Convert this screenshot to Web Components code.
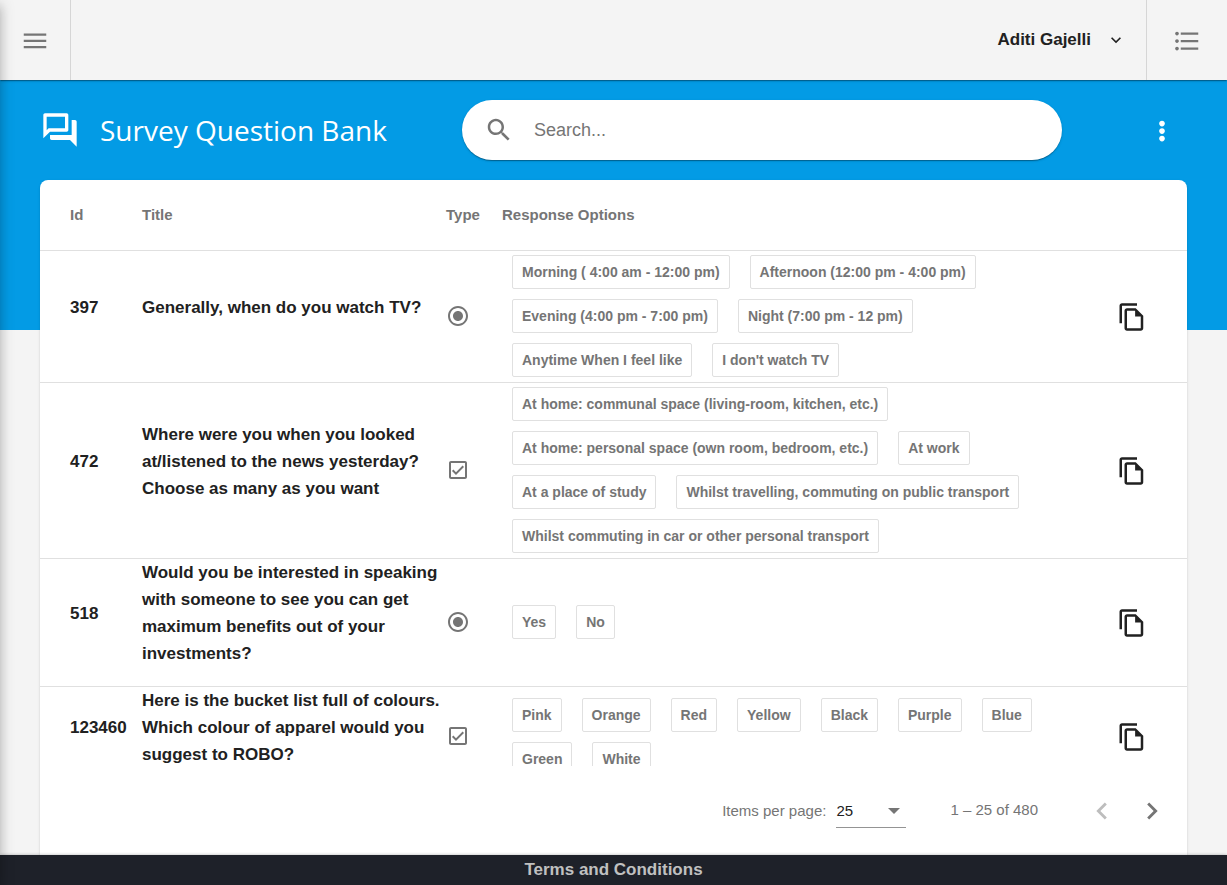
<!DOCTYPE html>
<html lang="en">
<head>
<meta charset="utf-8">
<meta name="viewport" content="width=device-width, initial-scale=1">
<title>Survey Question Bank</title>
<style>
  html, body { height: 100%; }
  body {
    margin: 0;
    font-family: "Liberation Sans", Arial, sans-serif;
    color: #212121;
    background: #f4f4f4;
    --primary: #039be5;
    --muted: #757575;
    --line: #e0e0e0;
    --shadow: 0 2px 1px -1px rgba(0,0,0,.2), 0 1px 1px rgba(0,0,0,.14), 0 1px 3px rgba(0,0,0,.12);
  }
</style>
</head>
<body>
<app-shell>
  <app-toolbar slot="toolbar">Aditi Gajelli</app-toolbar>
  <page-header slot="header">
    Survey Question Bank
    <search-box slot="search"></search-box>
  </page-header>
  <question-table></question-table>
  <table-paginator slot="paginator"></table-paginator>
  <app-footer slot="footer">Terms and Conditions</app-footer>
</app-shell>

<script>
function define(name, html, setup) {
  const template = document.createElement('template');
  template.innerHTML = html;
  customElements.define(name, class extends HTMLElement {
    constructor() {
      super();
      this.attachShadow({ mode: 'open' }).append(template.content.cloneNode(true));
    }
    connectedCallback() { if (setup) setup(this, this.shadowRoot); }
  });
}

const ICONS = {
  menu: 'M3 17.8h18v-1.800H3v1.800zm0-5h18v-1.800H3v1.800zm0-6.800v1.800h18V6H3z',
  list: 'M4 10.5c-.83 0-1.5.67-1.5 1.5s.67 1.5 1.5 1.5 1.5-.67 1.5-1.5-.67-1.5-1.5-1.5zm0-6c-.83 0-1.5.67-1.5 1.5S3.17 7.500 4 7.500 5.500 6.830 5.500 6 4.830 4.500 4 4.500zm0 12c-.83 0-1.500.680-1.500 1.500s.680 1.500 1.500 1.500 1.500-.680 1.500-1.500-.670-1.500-1.500-1.500zM7 18.900h14v-1.800H7v1.800zm0-6h14v-1.800H7v1.800zm0-7.800v1.800h14V5.100H7z',
  expand: 'M7.41 8.59 12 13.17l4.59-4.58L18 10l-6 6-6-6z',
  forum: 'M15 4v7H5.17L4 12.17V4h11m1-2H3c-.55 0-1 .45-1 1v14l4-4h10c.55 0 1-.45 1-1V3c0-.55-.45-1-1-1zm5 4h-2v9H6v2c0 .55.45 1 1 1h11l4 4V7c0-.55-.45-1-1-1z',
  search: 'M15.5 14h-.79l-.28-.27C15.41 12.59 16 11.110 16 9.500 16 5.910 13.090 3 9.500 3S3 5.910 3 9.500 5.910 16 9.500 16c1.610 0 3.090-.590 4.230-1.570l.270.280v.790l5 4.990L20.490 19l-4.990-5zm-6 0C7.010 14 5 11.990 5 9.500S7.010 5 9.500 5 14 7.010 14 9.500 11.990 14 9.500 14z',
  more: 'M12 8.300c1.270 0 2.300-1.030 2.300-2.300s-1.030-2.300-2.300-2.300-2.300 1.030-2.300 2.300 1.030 2.300 2.300 2.300zm0 1.400c-1.270 0-2.300 1.030-2.300 2.300s1.030 2.300 2.300 2.300 2.300-1.030 2.300-2.300-1.030-2.300-2.300-2.300zm0 6c-1.270 0-2.300 1.030-2.300 2.300s1.030 2.300 2.300 2.300 2.300-1.030 2.300-2.300-1.030-2.300-2.300-2.300z',
  radio: 'M12 7c-2.760 0-5 2.240-5 5s2.240 5 5 5 5-2.240 5-5-2.240-5-5-5zm0-5C6.480 2 2 6.480 2 12s4.480 10 10 10 10-4.480 10-10S17.520 2 12 2zm0 18c-4.420 0-8-3.580-8-8s3.580-8 8-8 8 3.580 8 8-3.580 8-8 8z',
  checkbox: 'M19 3H5c-1.100 0-2 .9-2 2v14c0 1.100.9 2 2 2h14c1.100 0 2-.9 2-2V5c0-1.100-.9-2-2-2zm0 16H5V5h14v14zM17.990 9l-1.410-1.420-6.590 6.590-2.580-2.570-1.420 1.410 4 3.990z',
  copy: 'M16 1H4c-1.100 0-2 .9-2 2v14h2V3h12V1zM15 5l6 6v10c0 1.100-.9 2-2 2H8c-1.100 0-2-.9-2-2V7c0-1.100.9-2 2-2h7zM8 7v14h11v-9.500h-4.500V7H8z',
  prev: 'M15.410 7.410 14 6l-6 6 6 6 1.410-1.410L10.830 12z',
  next: 'M10 6 8.590 7.410 13.170 12l-4.580 4.590L10 18l6-6z',
  dropdown: 'M6 10h12l-6 6z'
};

define('ui-icon', `
  <style>
    :host { display: block; width: var(--size, 24px); height: var(--size, 24px); flex: none; }
    svg { display: block; width: 100%; height: 100%; fill: currentColor; }
  </style>
  <svg viewBox="0 0 24 24" aria-hidden="true"><path fill-rule="evenodd"></path></svg>`,
  (el, root) => root.querySelector('path').setAttribute('d', ICONS[el.getAttribute('name')]));

define('app-shell', `
  <style>
    :host { display: flex; flex-direction: column; height: 100vh; overflow: hidden; }
    aside {
      position: fixed; z-index: 3; top: 0; bottom: 0; right: 100%; width: 280px;
      box-shadow: 0 5px 5px -3px rgba(0,0,0,.2), 0 8px 10px 1px rgba(0,0,0,.14), 0 3px 14px 2px rgba(0,0,0,.12);
    }
    main {
      flex: 1; min-height: 0; display: flex; flex-direction: column; padding: 0 40px;
      background: linear-gradient(var(--primary) 0 250px, transparent 250px);
    }
    .card {
      flex: 1; min-height: 0; display: flex; flex-direction: column;
      background: #fff; border-radius: 8px 8px 0 0; box-shadow: var(--shadow);
    }
    .scroll { flex: 1; min-height: 0; overflow-y: auto; scrollbar-width: none; }
  </style>
  <aside></aside>
  <slot name="toolbar"></slot>
  <main>
    <slot name="header"></slot>
    <section class="card">
      <div class="scroll"><slot></slot></div>
      <slot name="paginator"></slot>
    </section>
  </main>
  <slot name="footer"></slot>`);

define('app-toolbar', `
  <style>
    :host { display: flex; height: 80px; flex: none; position: relative; z-index: 2; background: #f4f4f4; box-shadow: var(--shadow); }
    button { font: inherit; color: inherit; background: none; border: 0; padding: 0; display: flex; align-items: center; justify-content: center; }
    .side { --size: 30px; box-sizing: border-box; color: var(--muted); padding-top: 2px; }
    .menu { width: 71px; border-right: 1px solid #d6d6d6; }
    .list { width: 81px; border-left: 1px solid #d6d6d6; }
    .user { --size: 20px; margin-left: auto; padding: 0 20px; gap: 15px; font-size: 17px; font-weight: bold; }
  </style>
  <button class="side menu" aria-label="Open menu"><ui-icon name="menu"></ui-icon></button>
  <button class="user"><span><slot></slot></span><ui-icon name="expand"></ui-icon></button>
  <button class="side list" aria-label="Quick panel"><ui-icon name="list"></ui-icon></button>`);

define('page-header', `
  <style>
    :host { display: grid; grid-template-columns: 422px minmax(0, 600px) 1fr; align-items: center; height: 100px; flex: none; color: #fff; }
    .title { display: flex; align-items: center; gap: 20px; --size: 40px; }
    h1 { margin: 0; font: 400 28px/40px "Open Sans", "Noto Sans", sans-serif; white-space: nowrap; }
    button { justify-self: end; width: 50px; height: 50px; padding: 2px 0 0; border: 0; background: none; color: inherit; display: grid; place-items: center; --size: 30px; }
  </style>
  <div class="title"><ui-icon name="forum"></ui-icon><h1><slot></slot></h1></div>
  <slot name="search"></slot>
  <button aria-label="More options"><ui-icon name="more"></ui-icon></button>`);

define('search-box', `
  <style>
    :host { display: block; }
    label {
      display: flex; align-items: center; gap: 20px; height: 60px; padding: 0 22px; box-sizing: border-box;
      border-radius: 30px; background: #fff; color: var(--muted); box-shadow: var(--shadow); --size: 30px;
    }
    input { flex: 1; min-width: 0; border: 0; outline: 0; padding: 0; background: none; font: 18px "Liberation Sans", Arial, sans-serif; color: #212121; }
    input::placeholder { color: var(--muted); opacity: 1; }
  </style>
  <label><ui-icon name="search"></ui-icon><input type="text" placeholder="Search..." aria-label="Search"></label>`);

define('response-chip', `
  <style>
    :host {
      display: block; padding: 0 9px; border: 1px solid var(--line); border-radius: 2px;
      font-size: 14px; font-weight: bold; line-height: 32px; color: var(--muted); white-space: nowrap;
    }
  </style>
  <slot></slot>`);

const QUESTIONS = [
  { id: 397, title: 'Generally, when do you watch TV?', type: 'radio',
    options: ['Morning ( 4:00 am - 12:00 pm)', 'Afternoon (12:00 pm - 4:00 pm)', 'Evening (4:00 pm - 7:00 pm)', 'Night (7:00 pm - 12 pm)', 'Anytime When I feel like', "I don't watch TV"] },
  { id: 472, title: 'Where were you when you looked at/listened to the news yesterday? Choose as many as you want', type: 'checkbox',
    options: ['At home: communal space (living-room, kitchen, etc.)', 'At home: personal space (own room, bedroom, etc.)', 'At work', 'At a place of study', 'Whilst travelling, commuting on public transport', 'Whilst commuting in car or other personal transport'] },
  { id: 518, title: 'Would you be interested in speaking with someone to see you can get maximum benefits out of your investments?', type: 'radio',
    options: ['Yes', 'No'] },
  { id: 123460, title: 'Here is the bucket list full of colours. Which colour of apparel would you suggest to ROBO?', type: 'checkbox',
    options: ['Pink', 'Orange', 'Red', 'Yellow', 'Black', 'Purple', 'Blue', 'Green', 'White'] }
];

define('question-table', `
  <style>
    :host { display: block; }
    table { width: 100%; table-layout: fixed; border-collapse: separate; border-spacing: 0; }
    .c-id { width: 102px; } .c-title { width: 304px; } .c-type { width: 56px; } .c-copy { width: 110px; }
    th, td { padding: 0; text-align: left; vertical-align: middle; border-bottom: 1px solid var(--line); }
    th { height: 68px; padding-bottom: 2px; font-size: 15px; color: var(--muted); white-space: nowrap; }
    th:first-child, td:first-child { padding-left: 30px; }
    .text { font-size: 17px; font-weight: bold; line-height: 27px; padding-bottom: 19px; }
    .type { color: var(--muted); padding-bottom: 2px; }
    .options { padding: 4px 0 5px 10px; }
    .chips { display: flex; flex-wrap: wrap; gap: 10px 20px; }
    button { display: block; margin: 0 auto; padding: 0; border: 0; background: none; color: #212121; --size: 30px; }
  </style>
  <table>
    <colgroup><col class="c-id"><col class="c-title"><col class="c-type"><col><col class="c-copy"></colgroup>
    <thead><tr><th>Id</th><th>Title</th><th>Type</th><th>Response Options</th><th></th></tr></thead>
    <tbody></tbody>
  </table>`,
  (el, root) => {
    root.querySelector('tbody').innerHTML = QUESTIONS.map(q => `
      <tr>
        <td class="text">${q.id}</td>
        <td class="text">${q.title}</td>
        <td class="type"><ui-icon name="${q.type}" role="img" aria-label="${q.type}"></ui-icon></td>
        <td class="options"><div class="chips">${q.options.map(o => `<response-chip>${o}</response-chip>`).join('')}</div></td>
        <td><button aria-label="Copy question ${q.id}"><ui-icon name="copy"></ui-icon></button></td>
      </tr>`).join('');
  });

define('table-paginator', `
  <style>
    :host { display: flex; justify-content: flex-end; align-items: center; flex: none; height: 89px; padding-right: 10px; font-size: 15px; color: var(--muted); }
    label { margin-right: 10px; }
    .select { display: grid; width: 70px; margin-right: 44px; border-bottom: 1px solid #949494; }
    select { grid-area: 1 / 1; appearance: none; border: 0; margin: 0; padding: 0; height: 34px; background: none; font: inherit; color: #212121; }
    .select ui-icon { grid-area: 1 / 1; justify-self: end; align-self: center; pointer-events: none; }
    .range { margin-right: 39px; padding-bottom: 2px; }
    button { width: 50px; height: 50px; padding: 0; border: 0; background: none; color: var(--muted); display: grid; place-items: center; --size: 34px; }
    button:disabled { color: #bdbdbd; }
  </style>
  <label for="size">Items per page:</label>
  <div class="select">
    <select id="size"><option>25</option><option>50</option><option>100</option></select>
    <ui-icon name="dropdown"></ui-icon>
  </div>
  <span class="range">1 – 25 of 480</span>
  <button aria-label="Previous page" disabled><ui-icon name="prev"></ui-icon></button>
  <button aria-label="Next page"><ui-icon name="next"></ui-icon></button>`);

define('app-footer', `
  <style>
    :host { display: block; flex: none; position: relative; z-index: 1; background: #1e2129; text-align: center; box-shadow: 0 0 3px rgba(0,0,0,.3); }
    a { font-size: 17px; font-weight: bold; line-height: 30px; color: #c0c0c0; text-decoration: none; display: block; }
  </style>
  <a href="#terms"><slot></slot></a>`);
</script>
</body>
</html>
